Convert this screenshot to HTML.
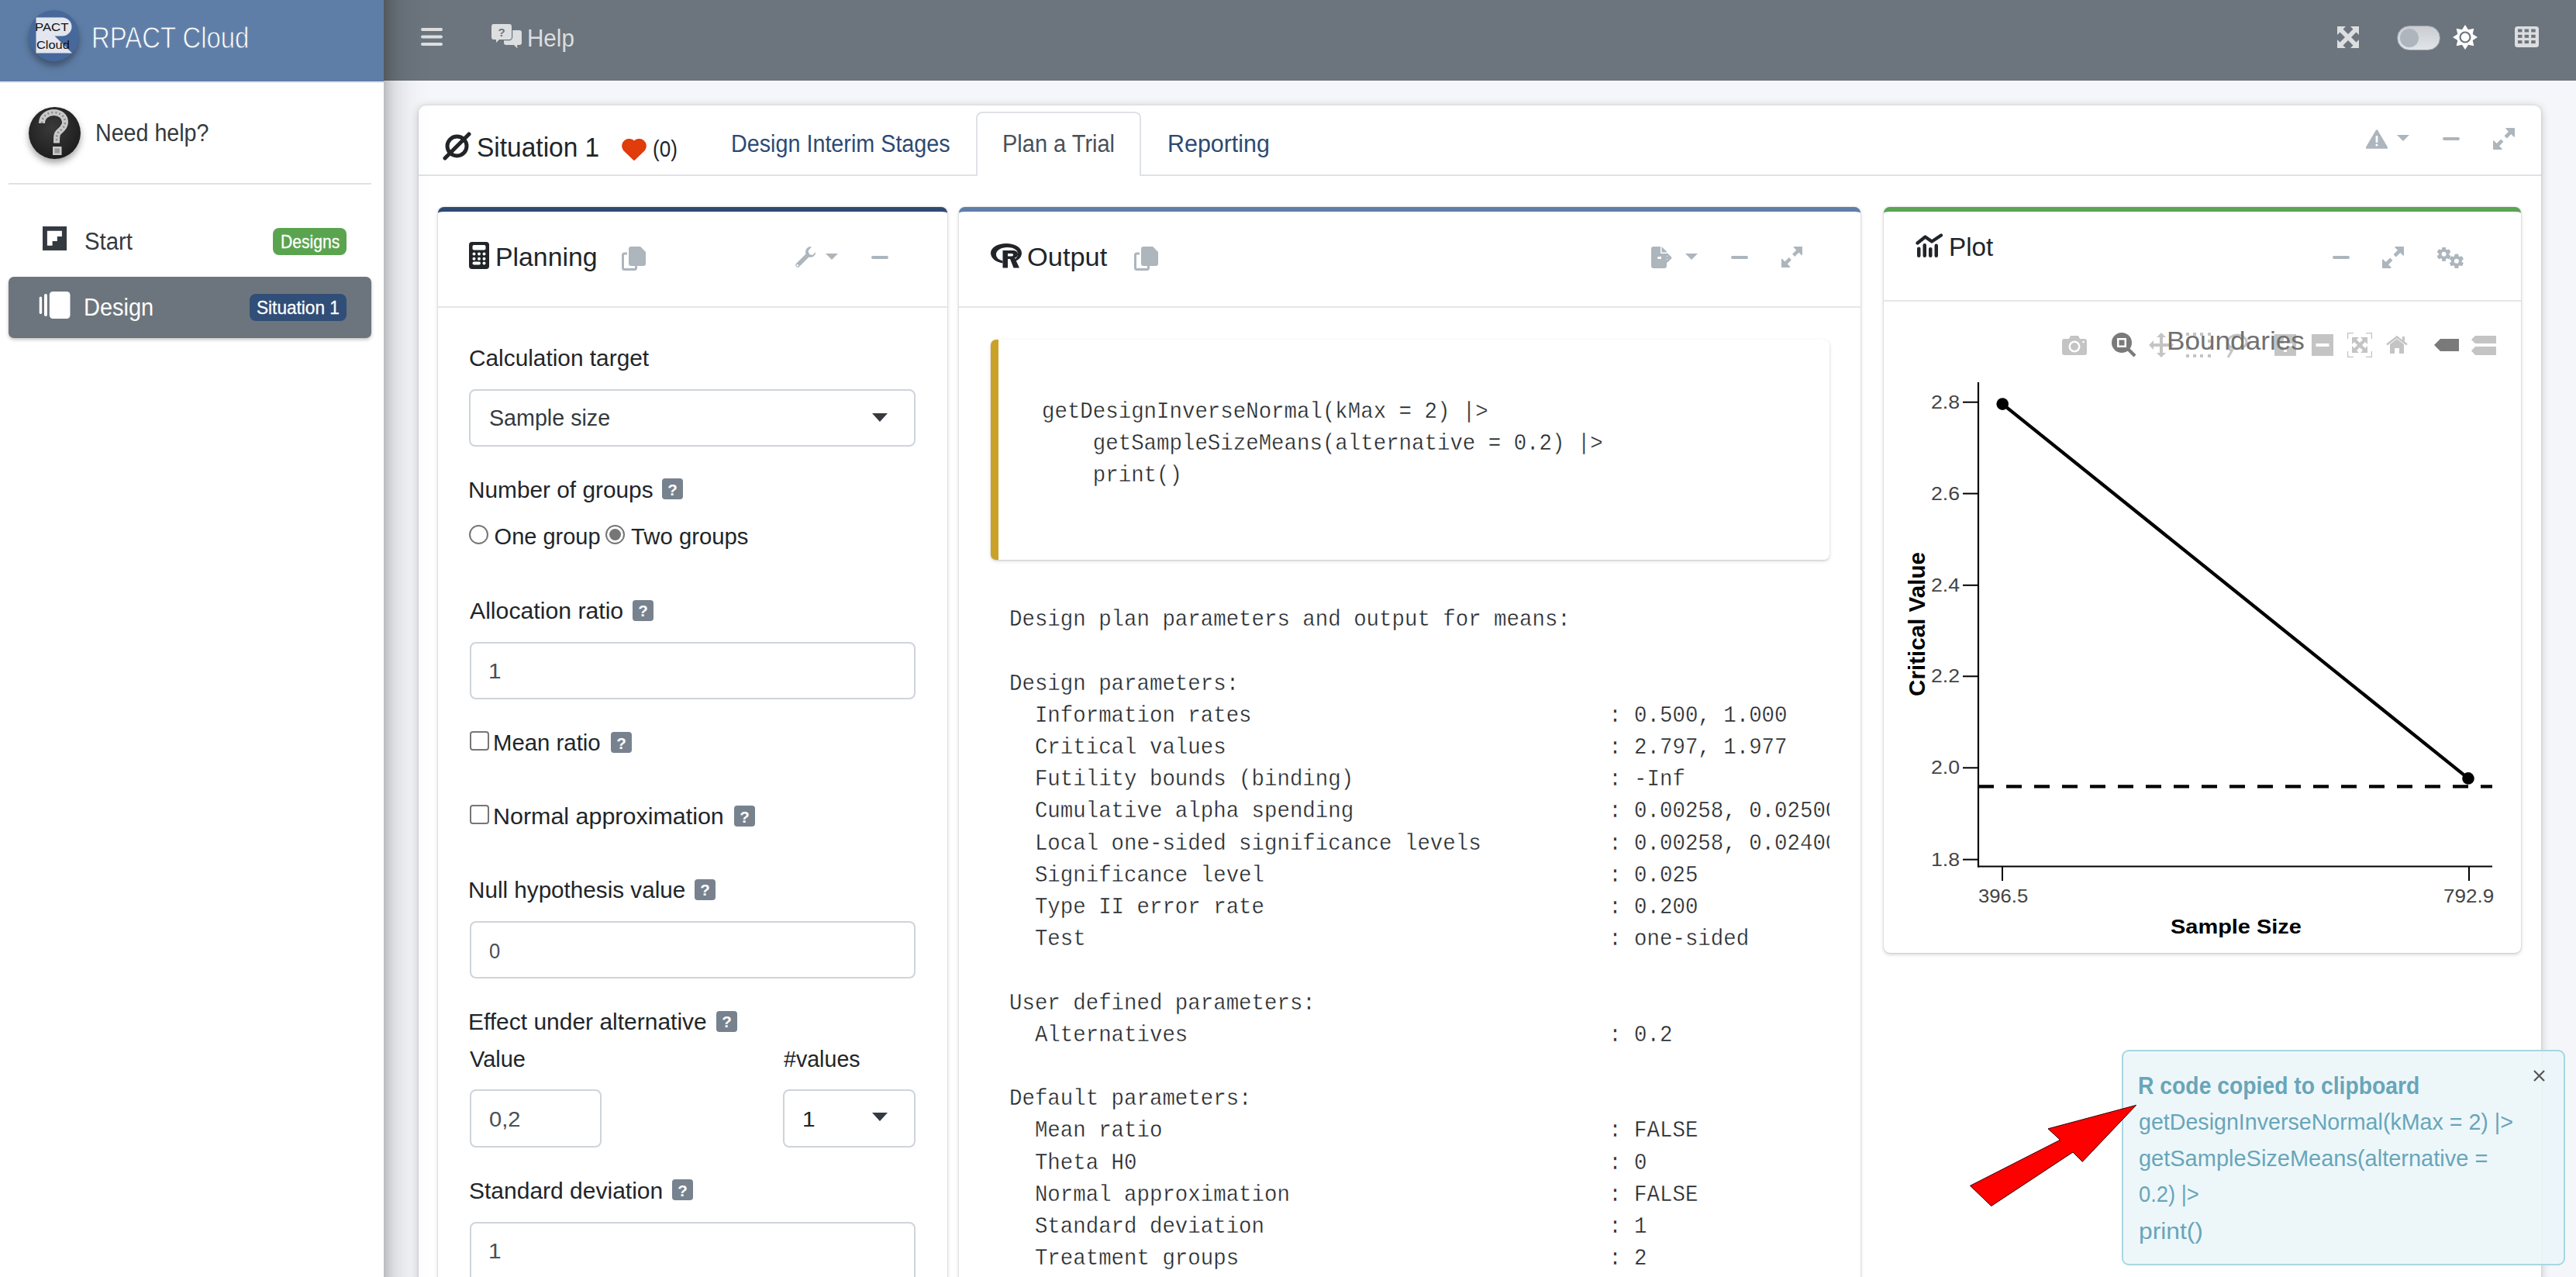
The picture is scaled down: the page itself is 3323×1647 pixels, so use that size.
<!DOCTYPE html>
<html><head><meta charset="utf-8"><title>RPACT Cloud</title>
<style>
html,body{margin:0;padding:0;}
body{width:3323px;height:1647px;overflow:hidden;position:relative;background:#f4f6f9;font-family:'Liberation Sans',sans-serif;}
.b{position:absolute;display:block;}
.t{position:absolute;white-space:pre;line-height:1;transform-origin:0 0;z-index:6;}
</style></head><body>
<div class="b" style="left:540px;top:136px;width:2738px;height:1564px;background:#fff;border-radius:9px;box-shadow:0 0 2px rgba(0,0,0,.15),0 2px 12px rgba(0,0,0,.22);"></div>
<div class="b" style="left:540px;top:224.5px;width:2738px;height:2.0px;background:#dee2e6;"></div>
<div class="b" style="left:1259px;top:144px;width:213px;height:83px;background:#fff;border:2px solid #dee2e6;border-bottom:none;border-radius:8px 8px 0 0;box-sizing:border-box;"></div>
<div class="b" style="left:0px;top:-60px;width:495px;height:1767px;background:#fff;box-shadow:0 0 50px rgba(0,0,0,.3),0 0 16px rgba(0,0,0,.2);z-index:2;"></div>
<div class="b" style="left:0px;top:0px;width:495px;height:105px;background:#5f7ea7;z-index:3;"></div>
<div class="b" style="left:0px;top:105px;width:495px;height:1.5px;background:#e3e7ec;z-index:3;"></div>
<div class="b" style="left:495px;top:0px;width:2828px;height:104px;background:#6c757d;"></div>
<div class="b" style="left:495px;top:104px;width:2828px;height:1px;background:#f8f9fa;"></div>
<div class="b" style="left:565px;top:267px;width:657px;height:1433px;background:#fff;border-radius:8px;border-top:6px solid #2f4b73;box-sizing:border-box;box-shadow:0 0 2px rgba(0,0,0,.2),0 2px 5px rgba(0,0,0,.18);"></div>
<div class="b" style="left:565px;top:395px;width:657px;height:2px;background:#e3e5e8;"></div>
<div class="b" style="left:1237px;top:267px;width:1163px;height:1433px;background:#fff;border-radius:8px;border-top:6px solid #5f7ea8;box-sizing:border-box;box-shadow:0 0 2px rgba(0,0,0,.2),0 2px 5px rgba(0,0,0,.18);"></div>
<div class="b" style="left:1237px;top:395px;width:1163px;height:2px;background:#e3e5e8;"></div>
<div class="b" style="left:2430px;top:267px;width:822px;height:962px;background:#fff;border-radius:8px;border-top:6px solid #5aa454;box-sizing:border-box;box-shadow:0 0 2px rgba(0,0,0,.2),0 2px 5px rgba(0,0,0,.18);"></div>
<div class="b" style="left:2430px;top:387px;width:822px;height:2px;background:#e3e5e8;"></div>
<div class="b" style="left:37px;top:13px;width:65px;height:66px;border-radius:50%;background:#46689b;box-shadow:0 6px 10px rgba(0,0,0,.35);z-index:4;overflow:hidden"><svg style="position:absolute;left:0;top:0" width="65" height="66" viewBox="0 0 65 66"><path d="M9.5 9.5H43A12.5 12 0 0 1 43 33.5H33.5L56 55.5H9.5Z" fill="#e3e6ee"/></svg></div>
<div class="b" style="left:37px;top:138px;width:67px;height:67px;border-radius:50%;background:radial-gradient(circle at 45% 40%,#3a3a3a,#141414);box-shadow:0 5px 9px rgba(0,0,0,.35);z-index:4"></div>
<svg class="b" style="left:37px;top:138px;z-index:5" width="67" height="67" viewBox="37 138 67 67"><path d="M54 159C54 150.5 61 145 69.5 145C78 145 84 150.5 84 157.5C84 164.5 78.5 167.5 75.5 170.5C73 173 73 176 73 184.5" fill="none" stroke="#c9c9c9" stroke-width="8" stroke-linecap="butt"/><path d="M54 159C54 150.5 61 145 69.5 145C78 145 84 150.5 84 157.5C84 164.5 78.5 167.5 75.5 170.5C73 173 73 176 73 184.5" fill="none" stroke="#8a8a8a" stroke-width="2.5" stroke-dasharray="2 3"/><rect x="68" y="189" width="11.5" height="11" fill="#c9c9c9"/><rect x="70.5" y="191.5" width="6.5" height="6" fill="#999"/></svg>
<div class="b" style="left:11px;top:236px;width:468px;height:2px;background:#dee2e6;z-index:4;"></div>
<svg class="b" style="left:55px;top:292px;z-index:4" width="31" height="31" viewBox="0 0 31 31"><rect width="31" height="31" fill="#343a40"/><path d="M5.9 5.8H24.9V12.9H18.8V19H12.6V24.8H5.9Z" fill="#fff"/></svg>
<div class="b" style="left:352px;top:294px;width:95px;height:35px;background:#5aa450;border-radius:8px;z-index:4;"></div>
<div class="b" style="left:11px;top:357px;width:468px;height:79px;background:#6c757d;border-radius:7px;box-shadow:0 2px 4px rgba(0,0,0,.25);z-index:4;"></div>
<svg class="b" style="left:50px;top:375px;z-index:5" width="41" height="37" viewBox="0 0 41 37"><rect x="0.7" y="7.4" width="3.4" height="22.5" rx="1.7" fill="#fff"/><rect x="7" y="4" width="3.9" height="29" rx="1.9" fill="#fff"/><rect x="13.8" y="1" width="26.7" height="35" rx="4.5" fill="#fff"/></svg>
<div class="b" style="left:322px;top:379px;width:125px;height:35px;background:#304e77;border-radius:8px;z-index:5;"></div>
<svg class="b" style="left:543px;top:35px" width="28" height="25" viewBox="0 0 28 25"><rect y="1" width="28" height="4" rx="2" fill="#dcdee0"/><rect y="10.5" width="28" height="4" rx="2" fill="#dcdee0"/><rect y="20" width="28" height="4" rx="2" fill="#dcdee0"/></svg>
<svg class="b" style="left:633px;top:30px" width="42" height="35" viewBox="-1 -1 42 35"><path d="M19 8H36A3 3 0 0 1 39 11V24A3 3 0 0 1 36 27H33L33.5 31.5L29 27H19A3 3 0 0 1 16 24V11A3 3 0 0 1 19 8Z" fill="#dcdee0"/><path d="M3 0H23A3 3 0 0 1 26 3V17A3 3 0 0 1 23 20H10L6 24V20H3A3 3 0 0 1 0 17V3A3 3 0 0 1 3 0Z" fill="#dcdee0" stroke="#6c757d" stroke-width="2.4" paint-order="stroke"/><text x="13" y="15.5" font-family="Liberation Sans" font-weight="bold" font-size="15" text-anchor="middle" fill="#6c757d">?</text></svg>
<svg class="b" style="left:3015px;top:34px" width="28" height="28" viewBox="0 0 28 28"><path d="M0 0H11L7.5 3.5L14 10L20.5 3.5L17 0H28V11L24.5 7.5L18 14L24.5 20.5L28 17V28H17L20.5 24.5L14 18L7.5 24.5L11 28H0V17L3.5 20.5L10 14L3.5 7.5L0 11Z" fill="#dcdee0"/></svg>
<div class="b" style="left:3092px;top:32.5px;width:56px;height:32.5px;border-radius:17px;background:linear-gradient(180deg,#c9ccd1,#e1e4e8);border:1.5px solid #9aa1a9;box-sizing:border-box"></div>
<div class="b" style="left:3096px;top:37px;width:24px;height:24px;background:#adb5bd;border-radius:50%;"></div>
<svg class="b" style="left:3163px;top:31px" width="34" height="34" viewBox="-17 -17 34 34"><polygon fill="#fff" points="0.00,-16.00 4.02,-9.70 11.31,-11.31 9.70,-4.02 16.00,0.00 9.70,4.02 11.31,11.31 4.02,9.70 0.00,16.00 -4.02,9.70 -11.31,11.31 -9.70,4.02 -16.00,0.00 -9.70,-4.02 -11.31,-11.31 -4.02,-9.70"/><circle r="6.5" fill="none" stroke="#6c757d" stroke-width="2.2"/></svg>
<svg class="b" style="left:3244px;top:34px" width="31" height="27" viewBox="0 0 31 27"><rect width="31" height="27" rx="3.5" fill="#dcdee0"/><rect x="4.0" y="3.5" width="5.5" height="4" fill="#6c757d"/><rect x="4.0" y="10.8" width="5.5" height="4" fill="#6c757d"/><rect x="4.0" y="18.1" width="5.5" height="4" fill="#6c757d"/><rect x="12.6" y="3.5" width="5.5" height="4" fill="#6c757d"/><rect x="12.6" y="10.8" width="5.5" height="4" fill="#6c757d"/><rect x="12.6" y="18.1" width="5.5" height="4" fill="#6c757d"/><rect x="21.2" y="3.5" width="5.5" height="4" fill="#6c757d"/><rect x="21.2" y="10.8" width="5.5" height="4" fill="#6c757d"/><rect x="21.2" y="18.1" width="5.5" height="4" fill="#6c757d"/></svg>
<svg class="b" style="left:571px;top:170px;z-index:6" width="37" height="37" viewBox="0 0 37 37"><circle cx="18.5" cy="18.5" r="12.5" fill="none" stroke="#212529" stroke-width="5"/><line x1="3" y1="34" x2="34" y2="3" stroke="#212529" stroke-width="5" stroke-linecap="round"/></svg>
<svg class="b" style="left:802px;top:179px;z-index:6" width="32" height="28" viewBox="0 0 32 28"><path d="M16 27L3 14.5A8 8 0 0 1 16 4A8 8 0 0 1 29 14.5Z" fill="#e03c0c" stroke="#e03c0c" stroke-width="2" stroke-linejoin="round"/></svg>
<svg class="b" style="left:3052px;top:167px" width="28" height="25" viewBox="0 0 28 25"><path d="M14 1.5L27 23.5H1Z" fill="#adb5bd" stroke="#adb5bd" stroke-width="2.5" stroke-linejoin="round"/><rect x="12.6" y="8" width="2.8" height="9" rx="1.2" fill="#fff"/><circle cx="14" cy="20" r="1.6" fill="#fff"/></svg>
<svg class="b" style="left:3092px;top:173.5px" width="16" height="8" viewBox="0 0 16 8"><path d="M0 0H16L8 8Z" fill="#adb5bd"/></svg>
<div class="b" style="left:3151px;top:176.5px;width:22px;height:4.0px;background:#adb5bd;border-radius:2px;"></div>
<svg class="b" style="left:3216px;top:164.5px" width="28" height="28" viewBox="0 0 28 28"><path d="M17 0.7H27.3V11Z M0.7 17V27.3H11Z" fill="#adb5bd" stroke="#adb5bd" stroke-width="1.4" stroke-linejoin="round"/><path d="M22.5 5.5L16.2 11.8M5.5 22.5L11.8 16.2" stroke="#adb5bd" stroke-width="4.6"/></svg>
<svg class="b" style="left:605px;top:312px" width="26" height="35" viewBox="0 0 26 35"><rect width="26" height="35" rx="4" fill="#212529"/><rect x="4.5" y="4" width="17" height="6.5" rx="2" fill="#fff"/><circle cx="6.5" cy="15.5" r="2" fill="#fff"/><circle cx="6.5" cy="21.7" r="2" fill="#fff"/><circle cx="13.0" cy="15.5" r="2" fill="#fff"/><circle cx="13.0" cy="21.7" r="2" fill="#fff"/><circle cx="19.5" cy="15.5" r="2" fill="#fff"/><circle cx="19.5" cy="21.7" r="2" fill="#fff"/><rect x="4.5" y="25.5" width="10.5" height="4" rx="2" fill="#fff"/><circle cx="19.5" cy="27.5" r="2" fill="#fff"/></svg>
<svg class="b" style="left:802px;top:318px" width="31" height="31" viewBox="0 0 31 31"><path d="M7 9H3.5A2 2 0 0 0 1.5 11V27.5A2 2 0 0 0 3.5 29.5H16.5A2 2 0 0 0 18.5 27.5V25" fill="none" stroke="#adb5bd" stroke-width="3"/><path d="M12 0H24L31 7V22A3 3 0 0 1 28 25H12A3 3 0 0 1 9 22V3A3 3 0 0 1 12 0Z" fill="#adb5bd"/></svg>
<svg class="b" style="left:1025px;top:318px" width="28" height="28" viewBox="0 0 28 28"><path d="M21 0A7 7 0 0 0 14.5 9.5L1.5 22.5A3 3 0 0 0 5.5 26.5L18.5 13.5A7 7 0 0 0 27.5 7L23 11L19 10L17.5 5.5L21.5 1Z" fill="#adb5bd"/><circle cx="3.8" cy="24.2" r="1.3" fill="#fff"/></svg>
<svg class="b" style="left:1065px;top:327px" width="16" height="8" viewBox="0 0 16 8"><path d="M0 0H16L8 8Z" fill="#adb5bd"/></svg>
<div class="b" style="left:1124px;top:330px;width:22px;height:3.5px;background:#adb5bd;border-radius:2px;"></div>
<div class="b" style="left:605px;top:501.5px;width:576px;height:74.0px;border:2px solid #ced4da;border-radius:8px;box-sizing:border-box;background:#fff;"></div>
<svg class="b" style="left:1125px;top:533px" width="20" height="11" viewBox="0 0 20 11"><path d="M0 0H20L10 11Z" fill="#343a40"/></svg>
<div class="b" style="left:854px;top:617px;width:27px;height:27px;border-radius:4px;background:#77828e;"></div>
<div class="b" style="left:854px;top:620.5px;width:27px;height:21px;font:bold 20.5px/21px 'Liberation Sans';color:#fff;text-align:center;z-index:6">?</div>
<div class="b" style="left:605px;top:676.5px;width:25px;height:25px;border-radius:50%;border:2px solid #767676;box-sizing:border-box;background:#fff"></div>
<div class="b" style="left:781px;top:676.5px;width:25px;height:25px;border-radius:50%;border:2px solid #767676;box-sizing:border-box;background:#fff"></div>
<div class="b" style="left:786px;top:681.5px;width:15px;height:15.0px;border-radius:50%;background:#767676;"></div>
<div class="b" style="left:816px;top:773.5px;width:27px;height:27px;border-radius:4px;background:#77828e;"></div>
<div class="b" style="left:816px;top:777.0px;width:27px;height:21px;font:bold 20.5px/21px 'Liberation Sans';color:#fff;text-align:center;z-index:6">?</div>
<div class="b" style="left:605.5px;top:828px;width:575.5px;height:73.5px;border:2px solid #ced4da;border-radius:8px;box-sizing:border-box;background:#fff;"></div>
<div class="b" style="left:605.5px;top:942.5px;width:25px;height:25px;border-radius:4px;border:2px solid #767676;box-sizing:border-box;background:#fff"></div>
<div class="b" style="left:788px;top:944px;width:27px;height:27px;border-radius:4px;background:#77828e;"></div>
<div class="b" style="left:788px;top:947.5px;width:27px;height:21px;font:bold 20.5px/21px 'Liberation Sans';color:#fff;text-align:center;z-index:6">?</div>
<div class="b" style="left:605.5px;top:1037.5px;width:25px;height:25px;border-radius:4px;border:2px solid #767676;box-sizing:border-box;background:#fff"></div>
<div class="b" style="left:947px;top:1039px;width:27px;height:27px;border-radius:4px;background:#77828e;"></div>
<div class="b" style="left:947px;top:1042.5px;width:27px;height:21px;font:bold 20.5px/21px 'Liberation Sans';color:#fff;text-align:center;z-index:6">?</div>
<div class="b" style="left:896px;top:1133.5px;width:27px;height:27px;border-radius:4px;background:#77828e;"></div>
<div class="b" style="left:896px;top:1137.0px;width:27px;height:21px;font:bold 20.5px/21px 'Liberation Sans';color:#fff;text-align:center;z-index:6">?</div>
<div class="b" style="left:605.5px;top:1187.5px;width:575.5px;height:74.0px;border:2px solid #ced4da;border-radius:8px;box-sizing:border-box;background:#fff;"></div>
<div class="b" style="left:924px;top:1303.5px;width:27px;height:27px;border-radius:4px;background:#77828e;"></div>
<div class="b" style="left:924px;top:1307.0px;width:27px;height:21px;font:bold 20.5px/21px 'Liberation Sans';color:#fff;text-align:center;z-index:6">?</div>
<div class="b" style="left:606px;top:1404.5px;width:169.5px;height:75.0px;border:2px solid #ced4da;border-radius:8px;box-sizing:border-box;background:#fff;"></div>
<div class="b" style="left:1010px;top:1404.5px;width:171px;height:75.0px;border:2px solid #ced4da;border-radius:8px;box-sizing:border-box;background:#fff;"></div>
<svg class="b" style="left:1125px;top:1435px" width="20" height="11" viewBox="0 0 20 11"><path d="M0 0H20L10 11Z" fill="#343a40"/></svg>
<div class="b" style="left:867px;top:1521px;width:27px;height:27px;border-radius:4px;background:#77828e;"></div>
<div class="b" style="left:867px;top:1524.5px;width:27px;height:21px;font:bold 20.5px/21px 'Liberation Sans';color:#fff;text-align:center;z-index:6">?</div>
<div class="b" style="left:605.5px;top:1575.5px;width:575.5px;height:124.5px;border:2px solid #ced4da;border-radius:8px;box-sizing:border-box;background:#fff;"></div>
<svg class="b" style="left:1278px;top:313.5px" width="40" height="32" viewBox="0 0 40 32"><path fill="#212529" fill-rule="evenodd" d="M20 0C31 0 40 5 40 12.5C40 17.5 36 21.5 30 23.5L29.5 21C33.5 19.5 35 16.5 35 13.5C35 8 29 5 21.5 5C13 5 7 9 7 14C7 18 10 21 15.5 22.5V25.5C6.5 24 0 19 0 12.5C0 5 9 0 20 0Z"/><path fill="#212529" fill-rule="evenodd" d="M15.5 9H29C33 9 35 11.5 35 14C35 16.5 33.5 18 31 18.5L37 31.5H29.5L25 20H22V31.5H15.5Z M22 13V16.5H27C28.5 16.5 29 15.8 29 14.8C29 13.8 28.5 13 27 13Z"/></svg>
<svg class="b" style="left:1463px;top:318px" width="31" height="31" viewBox="0 0 31 31"><path d="M7 9H3.5A2 2 0 0 0 1.5 11V27.5A2 2 0 0 0 3.5 29.5H16.5A2 2 0 0 0 18.5 27.5V25" fill="none" stroke="#adb5bd" stroke-width="3"/><path d="M12 0H24L31 7V22A3 3 0 0 1 28 25H12A3 3 0 0 1 9 22V3A3 3 0 0 1 12 0Z" fill="#adb5bd"/></svg>
<svg class="b" style="left:2130px;top:318px" width="32" height="28" viewBox="0 0 32 28"><path d="M3 0H12V7.5A1.5 1.5 0 0 0 13.5 9H20V13H9.5A1.5 1.5 0 0 0 9.5 16H20V25A3 3 0 0 1 17 28H3A3 3 0 0 1 0 25V3A3 3 0 0 1 3 0Z M13.5 0L20 6.5V7.5H13.5Z" fill="#adb5bd"/><path d="M20.5 10L25 14.5L20.5 19" fill="none" stroke="#adb5bd" stroke-width="3" stroke-linecap="round" stroke-linejoin="round"/><path d="M13 14.5H24" stroke="#adb5bd" stroke-width="3"/></svg>
<svg class="b" style="left:2174px;top:327px" width="16" height="8" viewBox="0 0 16 8"><path d="M0 0H16L8 8Z" fill="#adb5bd"/></svg>
<div class="b" style="left:2233px;top:330px;width:22px;height:3.5px;background:#adb5bd;border-radius:2px;"></div>
<svg class="b" style="left:2298px;top:318px" width="27" height="27" viewBox="0 0 28 28"><path d="M17 0.7H27.3V11Z M0.7 17V27.3H11Z" fill="#adb5bd" stroke="#adb5bd" stroke-width="1.4" stroke-linejoin="round"/><path d="M22.5 5.5L16.2 11.8M5.5 22.5L11.8 16.2" stroke="#adb5bd" stroke-width="4.6"/></svg>
<div class="b" style="left:1278px;top:438px;width:1082px;height:284px;background:#fff;border-left:10px solid #c9a227;border-radius:7px;box-sizing:border-box;box-shadow:0 1px 2px rgba(0,0,0,.12),0 2px 5px rgba(0,0,0,.12);"></div>
<div class="b" style="left:1344px;top:516.70px;font:29.8px/41px 'Liberation Mono';color:#212529;white-space:pre;transform:scaleX(0.9200);transform-origin:0 0;z-index:6;-webkit-text-stroke:.4px #fff;line-height:41px;margin-top:-5.60px">getDesignInverseNormal(kMax = 2) |&gt;
    getSampleSizeMeans(alternative = 0.2) |&gt;
    print()</div>
<div class="b" style="left:1237px;top:740px;width:1123px;height:960px;overflow:hidden;z-index:6"><div style="position:absolute;left:65px;top:39.20px;font:29.8px/41.2px 'Liberation Mono';color:#212529;white-space:pre;transform:scaleX(0.9200);transform-origin:0 0;-webkit-text-stroke:.4px #fff;">Design plan parameters and output for means:

Design parameters:
  Information rates                            : 0.500, 1.000
  Critical values                              : 2.797, 1.977
  Futility bounds (binding)                    : -Inf
  Cumulative alpha spending                    : 0.00258, 0.02500
  Local one-sided significance levels          : 0.00258, 0.02400
  Significance level                           : 0.025
  Type II error rate                           : 0.200
  Test                                         : one-sided

User defined parameters:
  Alternatives                                 : 0.2

Default parameters:
  Mean ratio                                   : FALSE
  Theta H0                                     : 0
  Normal approximation                         : FALSE
  Standard deviation                           : 1
  Treatment groups                             : 2
  Planned allocation ratio                     : 1</div></div>
<svg class="b" style="left:2471px;top:301px" width="36" height="32" viewBox="0 0 36 32"><path d="M2.5 12.5L12.5 4.5L21 10.5L33 2.5" fill="none" stroke="#212529" stroke-width="4.2" stroke-linecap="round" stroke-linejoin="round"/><rect x="2" y="17.5" width="4.5" height="13.5" rx="2.25" fill="#212529"/><rect x="9.5" y="13" width="4.5" height="18" rx="2.25" fill="#212529"/><rect x="17" y="18" width="4.5" height="13" rx="2.25" fill="#212529"/><rect x="24.5" y="13.5" width="4.5" height="17.5" rx="2.25" fill="#212529"/></svg>
<div class="b" style="left:3009px;top:329.5px;width:22px;height:4.0px;background:#adb5bd;border-radius:2px;"></div>
<svg class="b" style="left:3073px;top:317.5px" width="28" height="28" viewBox="0 0 28 28"><path d="M17 0.7H27.3V11Z M0.7 17V27.3H11Z" fill="#adb5bd" stroke="#adb5bd" stroke-width="1.4" stroke-linejoin="round"/><path d="M22.5 5.5L16.2 11.8M5.5 22.5L11.8 16.2" stroke="#adb5bd" stroke-width="4.6"/></svg>
<svg class="b" style="left:3143px;top:318px" width="36" height="28" viewBox="0 0 36 28"><g transform="translate(9.6,9.8)"><rect x="-2.4" y="-8.899999999999999" width="4.8" height="17.799999999999997" rx="1.2" fill="#adb5bd" transform="rotate(0)"/><rect x="-2.4" y="-8.899999999999999" width="4.8" height="17.799999999999997" rx="1.2" fill="#adb5bd" transform="rotate(60)"/><rect x="-2.4" y="-8.899999999999999" width="4.8" height="17.799999999999997" rx="1.2" fill="#adb5bd" transform="rotate(120)"/><rect x="-2.4" y="-8.899999999999999" width="4.8" height="17.799999999999997" rx="1.2" fill="#adb5bd" transform="rotate(180)"/><rect x="-2.4" y="-8.899999999999999" width="4.8" height="17.799999999999997" rx="1.2" fill="#adb5bd" transform="rotate(240)"/><rect x="-2.4" y="-8.899999999999999" width="4.8" height="17.799999999999997" rx="1.2" fill="#adb5bd" transform="rotate(300)"/><circle r="6.79" fill="#adb5bd"/><circle r="2.96" fill="#fff"/></g><g transform="translate(25.9,18.8)"><rect x="-2.4" y="-9.1" width="4.8" height="18.2" rx="1.2" fill="#adb5bd" transform="rotate(0)"/><rect x="-2.4" y="-9.1" width="4.8" height="18.2" rx="1.2" fill="#adb5bd" transform="rotate(60)"/><rect x="-2.4" y="-9.1" width="4.8" height="18.2" rx="1.2" fill="#adb5bd" transform="rotate(120)"/><rect x="-2.4" y="-9.1" width="4.8" height="18.2" rx="1.2" fill="#adb5bd" transform="rotate(180)"/><rect x="-2.4" y="-9.1" width="4.8" height="18.2" rx="1.2" fill="#adb5bd" transform="rotate(240)"/><rect x="-2.4" y="-9.1" width="4.8" height="18.2" rx="1.2" fill="#adb5bd" transform="rotate(300)"/><circle r="6.94" fill="#adb5bd"/><circle r="3.03" fill="#fff"/></g></svg>
<svg class="b" style="left:2660px;top:432px;z-index:7" width="32" height="26" viewBox="0 0 32 26"><path d="M3 5H9L11 1H21L23 5H29A3 3 0 0 1 32 8V23A3 3 0 0 1 29 26H3A3 3 0 0 1 0 23V8A3 3 0 0 1 3 5Z" fill="#c4c4c4"/><circle cx="16" cy="15" r="7.5" fill="#fff"/><circle cx="16" cy="15" r="5" fill="#c4c4c4"/><circle cx="27.5" cy="9" r="1.3" fill="#fff"/></svg>
<svg class="b" style="left:2724px;top:429px;z-index:7" width="32" height="32" viewBox="0 0 32 32"><circle cx="13" cy="13" r="13" fill="#7a7a7a"/><rect x="7" y="7" width="12" height="12" fill="#fff"/><rect x="9.5" y="9.5" width="7" height="7" fill="#7a7a7a"/><path d="M20 23L23 20L31.5 28.5L28.5 31.5Z" fill="#7a7a7a"/></svg>
<svg class="b" style="left:2772px;top:429px;z-index:7" width="32" height="32" viewBox="0 0 32 32"><path d="M16 0L22 6H18V14H26V10L32 16L26 22V18H18V26H22L16 32L10 26H14V18H6V22L0 16L6 10V14H14V6H10Z" fill="#c4c4c4"/></svg>
<svg class="b" style="left:2820px;top:429px;z-index:7" width="32" height="32" viewBox="0 0 32 32"><rect x="0" y="0" width="4" height="4" fill="#c4c4c4"/><rect x="0" y="28" width="4" height="4" fill="#c4c4c4"/><rect x="9" y="0" width="4" height="4" fill="#c4c4c4"/><rect x="9" y="28" width="4" height="4" fill="#c4c4c4"/><rect x="18" y="0" width="4" height="4" fill="#c4c4c4"/><rect x="18" y="28" width="4" height="4" fill="#c4c4c4"/><rect x="28" y="0" width="4" height="4" fill="#c4c4c4"/><rect x="28" y="28" width="4" height="4" fill="#c4c4c4"/><rect x="0" y="9" width="4" height="4" fill="#c4c4c4"/><rect x="28" y="9" width="4" height="4" fill="#c4c4c4"/><rect x="0" y="18" width="4" height="4" fill="#c4c4c4"/><rect x="28" y="18" width="4" height="4" fill="#c4c4c4"/></svg>
<svg class="b" style="left:2868px;top:430px;z-index:7" width="32" height="32" viewBox="0 0 32 32"><ellipse cx="18" cy="11" rx="12" ry="9" fill="none" stroke="#c4c4c4" stroke-width="3"/><path d="M9 17C6 20 9 23 12 21L6 31" fill="none" stroke="#c4c4c4" stroke-width="3"/></svg>
<svg class="b" style="left:2934px;top:431px;z-index:7" width="28" height="28" viewBox="0 0 28 28"><rect width="28" height="28" fill="#c4c4c4"/><rect x="5" y="12" width="18" height="4" fill="#fff"/><rect x="12" y="5" width="4" height="18" fill="#fff"/></svg>
<svg class="b" style="left:2982px;top:431px;z-index:7" width="28" height="28" viewBox="0 0 28 28"><rect width="28" height="28" fill="#c4c4c4"/><rect x="5.5" y="12" width="17" height="4" fill="#fff"/></svg>
<svg class="b" style="left:3028px;top:429px;z-index:7" width="32" height="32" viewBox="0 0 32 32"><path d="M0 8V0H8M24 0H32V8M32 24V32H24M8 32H0V24" fill="none" stroke="#c4c4c4" stroke-width="2.5"/><path d="M6 6H15L12 9L16 13L20 9L17 6H26V15L23 12L19 16L23 20L26 17V26H17L20 23L16 19L12 23L15 26H6V17L9 20L13 16L9 12L6 15Z" fill="#c4c4c4"/></svg>
<svg class="b" style="left:3078px;top:433px;z-index:7" width="28" height="23" viewBox="0 0 28 23"><path d="M1 11.5L14 1.5L27 11.5" fill="none" stroke="#c4c4c4" stroke-width="2.5"/><path d="M21 1H24V8L21 6Z" fill="#c4c4c4"/><path d="M5 11L14 4L23 11V23H17V16H11V23H5Z" fill="#c4c4c4"/></svg>
<svg class="b" style="left:3140px;top:437px;z-index:7" width="32" height="16" viewBox="0 0 32 16"><path d="M8 0H32V16H8L0 8Z" fill="#7a7a7a"/></svg>
<svg class="b" style="left:3188px;top:433px;z-index:7" width="32" height="25" viewBox="0 0 32 25"><path d="M5 0H32V10H5L0 5Z M5 14H32V25H5L0 19.5Z" fill="#c4c4c4"/></svg>
<svg class="b" style="left:0;top:0;z-index:1" width="3323" height="1647" viewBox="0 0 3323 1647"><line x1="2552" y1="493" x2="2552" y2="1118.5" stroke="#000" stroke-width="2.2"/><line x1="2551" y1="1117.5" x2="3215" y2="1117.5" stroke="#000" stroke-width="2.2"/><line x1="2532" y1="518.7" x2="2552" y2="518.7" stroke="#000" stroke-width="2"/><line x1="2532" y1="636.6" x2="2552" y2="636.6" stroke="#000" stroke-width="2"/><line x1="2532" y1="754.8" x2="2552" y2="754.8" stroke="#000" stroke-width="2"/><line x1="2532" y1="872.3" x2="2552" y2="872.3" stroke="#000" stroke-width="2"/><line x1="2532" y1="990.3" x2="2552" y2="990.3" stroke="#000" stroke-width="2"/><line x1="2532" y1="1108.6" x2="2552" y2="1108.6" stroke="#000" stroke-width="2"/><line x1="2583" y1="1117" x2="2583" y2="1136" stroke="#000" stroke-width="2"/><line x1="3185" y1="1117" x2="3185" y2="1136" stroke="#000" stroke-width="2"/><line x1="2552" y1="1014.4" x2="3215" y2="1014.4" stroke="#000" stroke-width="4.4" stroke-dasharray="20 16"/><line x1="2583.2" y1="521.1" x2="3184" y2="1003.9" stroke="#000" stroke-width="4.4"/><circle cx="2583.2" cy="521.1" r="7.8" fill="#000"/><circle cx="3184" cy="1003.9" r="7.8" fill="#000"/></svg>
<div class="b" style="left:2473px;top:804.5px;width:0;height:0;z-index:6"><div style="position:absolute;left:0;top:0;transform:translate(-50%,-50%) rotate(-90deg);white-space:nowrap;font:bold 29.6px/1 'Liberation Sans';color:#000;transform-origin:50% 50%">Critical Value</div></div>
<div class="b" style="left:2737px;top:1354px;width:572px;height:278px;box-sizing:border-box;border:2px solid #a8d6e3;border-radius:9px;background:rgba(235,246,249,.9);z-index:8"></div>
<svg class="b" style="left:3268px;top:1380px;z-index:9" width="15" height="15" viewBox="0 0 15 15"><path d="M1 1L14 14M14 1L1 14" stroke="#555" stroke-width="2.2"/></svg>
<svg class="b" style="left:0;top:0;z-index:9" width="3323" height="1647" viewBox="0 0 3323 1647"><polygon points="2755.6,1425.4 2642,1455.8 2657.5,1470.2 2541.5,1529.3 2568.7,1555.5 2674,1486 2686.3,1498.3" fill="#ff0000" stroke="#300" stroke-width="1"/></svg>
<div class="t" style="left:45.38px;top:27.51px;font-size:14.93px;color:#111111;font-weight:normal;font-family:'Liberation Sans', sans-serif;transform:scaleX(1.1231);">PACT</div>
<div class="t" style="left:46.50px;top:50.91px;font-size:14.93px;color:#111111;font-weight:normal;font-family:'Liberation Sans', sans-serif;transform:scaleX(1.0985);">Cloud</div>
<div class="t" style="left:118.48px;top:29.34px;font-size:39.13px;color:#ffffff;font-weight:normal;font-family:'Liberation Sans', sans-serif;transform:scaleX(0.8402);z-index:6;-webkit-text-stroke:.9px #5f7ea7;">RPACT Cloud</div>
<div class="t" style="left:123.20px;top:155.50px;font-size:31.88px;color:#343a40;font-weight:normal;font-family:'Liberation Sans', sans-serif;transform:scaleX(0.8982);">Need help?</div>
<div class="t" style="left:108.54px;top:295.73px;font-size:30.43px;color:#343a40;font-weight:normal;font-family:'Liberation Sans', sans-serif;transform:scaleX(0.9641);">Start</div>
<div class="t" style="left:361.69px;top:300.99px;font-size:23.19px;color:#fff;font-weight:normal;font-family:'Liberation Sans', sans-serif;transform:scaleX(0.9102);-webkit-text-stroke:.3px #fff;">Designs</div>
<div class="t" style="left:107.59px;top:381.23px;font-size:30.43px;color:#fff;font-weight:normal;font-family:'Liberation Sans', sans-serif;transform:scaleX(0.9529);">Design</div>
<div class="t" style="left:331.02px;top:385.89px;font-size:23.19px;color:#fff;font-weight:normal;font-family:'Liberation Sans', sans-serif;transform:scaleX(0.9751);-webkit-text-stroke:.3px #fff;">Situation 1</div>
<div class="t" style="left:680.06px;top:33.53px;font-size:30.43px;color:#dcdee0;font-weight:normal;font-family:'Liberation Sans', sans-serif;transform:scaleX(0.9724);">Help</div>
<div class="t" style="left:615.04px;top:173.04px;font-size:34.78px;color:#212529;font-weight:normal;font-family:'Liberation Sans', sans-serif;transform:scaleX(0.9632);">Situation 1</div>
<div class="t" style="left:841.63px;top:177.10px;font-size:30px;color:#212529;font-weight:normal;font-family:'Liberation Sans', sans-serif;transform:scaleX(0.8681);">(0)</div>
<div class="t" style="left:942.51px;top:170.43px;font-size:30.43px;color:#2c4a73;font-weight:normal;font-family:'Liberation Sans', sans-serif;transform:scaleX(0.9445);">Design Interim Stages</div>
<div class="t" style="left:1293.09px;top:170.43px;font-size:30.43px;color:#495057;font-weight:normal;font-family:'Liberation Sans', sans-serif;transform:scaleX(0.9532);">Plan a Trial</div>
<div class="t" style="left:1506.00px;top:170.43px;font-size:30.43px;color:#2c4a73;font-weight:normal;font-family:'Liberation Sans', sans-serif;">Reporting</div>
<div class="t" style="left:638.97px;top:314.77px;font-size:33.33px;color:#212529;font-weight:normal;font-family:'Liberation Sans', sans-serif;transform:scaleX(1.0144);">Planning</div>
<div class="t" style="left:604.97px;top:448.26px;font-size:28.99px;color:#212529;font-weight:normal;font-family:'Liberation Sans', sans-serif;transform:scaleX(1.0289);">Calculation target</div>
<div class="t" style="left:631.01px;top:524.96px;font-size:28.99px;color:#343a40;font-weight:normal;font-family:'Liberation Sans', sans-serif;transform:scaleX(0.9888);">Sample size</div>
<div class="t" style="left:603.94px;top:617.96px;font-size:28.99px;color:#212529;font-weight:normal;font-family:'Liberation Sans', sans-serif;transform:scaleX(1.0283);">Number of groups</div>
<div class="t" style="left:637.60px;top:677.96px;font-size:28.99px;color:#212529;font-weight:normal;font-family:'Liberation Sans', sans-serif;">One group</div>
<div class="t" style="left:814.00px;top:677.96px;font-size:28.99px;color:#212529;font-weight:normal;font-family:'Liberation Sans', sans-serif;transform:scaleX(1.0111);">Two groups</div>
<div class="t" style="left:606.00px;top:774.16px;font-size:28.99px;color:#212529;font-weight:normal;font-family:'Liberation Sans', sans-serif;transform:scaleX(1.0424);">Allocation ratio</div>
<div class="t" style="left:629.83px;top:852.19px;font-size:27.54px;color:#495057;font-weight:normal;font-family:'Liberation Sans', sans-serif;transform:scaleX(1.0833);">1</div>
<div class="t" style="left:636.47px;top:943.96px;font-size:28.99px;color:#212529;font-weight:normal;font-family:'Liberation Sans', sans-serif;transform:scaleX(1.0126);">Mean ratio</div>
<div class="t" style="left:636.40px;top:1038.96px;font-size:28.99px;color:#212529;font-weight:normal;font-family:'Liberation Sans', sans-serif;transform:scaleX(1.0503);">Normal approximation</div>
<div class="t" style="left:603.95px;top:1133.96px;font-size:28.99px;color:#212529;font-weight:normal;font-family:'Liberation Sans', sans-serif;transform:scaleX(1.0230);">Null hypothesis value</div>
<div class="t" style="left:631.07px;top:1212.79px;font-size:27.54px;color:#495057;font-weight:normal;font-family:'Liberation Sans', sans-serif;transform:scaleX(0.9286);">0</div>
<div class="t" style="left:603.93px;top:1303.96px;font-size:28.99px;color:#212529;font-weight:normal;font-family:'Liberation Sans', sans-serif;transform:scaleX(1.0342);">Effect under alternative</div>
<div class="t" style="left:606.00px;top:1351.66px;font-size:28.99px;color:#212529;font-weight:normal;font-family:'Liberation Sans', sans-serif;">Value</div>
<div class="t" style="left:1010.70px;top:1351.66px;font-size:28.99px;color:#212529;font-weight:normal;font-family:'Liberation Sans', sans-serif;transform:scaleX(0.9868);">#values</div>
<div class="t" style="left:630.94px;top:1429.69px;font-size:27.54px;color:#495057;font-weight:normal;font-family:'Liberation Sans', sans-serif;transform:scaleX(1.0567);">0,2</div>
<div class="t" style="left:1034.83px;top:1429.69px;font-size:27.54px;color:#212529;font-weight:normal;font-family:'Liberation Sans', sans-serif;transform:scaleX(1.0833);">1</div>
<div class="t" style="left:604.96px;top:1521.76px;font-size:28.99px;color:#212529;font-weight:normal;font-family:'Liberation Sans', sans-serif;transform:scaleX(1.0351);">Standard deviation</div>
<div class="t" style="left:629.83px;top:1599.79px;font-size:27.54px;color:#495057;font-weight:normal;font-family:'Liberation Sans', sans-serif;transform:scaleX(1.0833);">1</div>
<div class="t" style="left:1324.97px;top:315.17px;font-size:33.33px;color:#212529;font-weight:normal;font-family:'Liberation Sans', sans-serif;transform:scaleX(1.0322);">Output</div>
<div class="t" style="left:2514.01px;top:302.27px;font-size:33.33px;color:#212529;font-weight:normal;font-family:'Liberation Sans', sans-serif;transform:scaleX(0.9970);">Plot</div>
<div class="t" style="left:2794.89px;top:422.77px;font-size:33.33px;color:#707070;font-weight:normal;font-family:'Liberation Sans', sans-serif;transform:scaleX(1.0546);z-index:8;">Boundaries</div>
<div class="t" style="left:2490.62px;top:506.66px;font-size:24.64px;color:#444444;font-weight:normal;font-family:'Liberation Sans', sans-serif;transform:scaleX(1.0849);">2.8</div>
<div class="t" style="left:2490.62px;top:624.56px;font-size:24.64px;color:#444444;font-weight:normal;font-family:'Liberation Sans', sans-serif;transform:scaleX(1.0849);">2.6</div>
<div class="t" style="left:2490.62px;top:742.76px;font-size:24.64px;color:#444444;font-weight:normal;font-family:'Liberation Sans', sans-serif;transform:scaleX(1.0849);">2.4</div>
<div class="t" style="left:2490.62px;top:860.26px;font-size:24.64px;color:#444444;font-weight:normal;font-family:'Liberation Sans', sans-serif;transform:scaleX(1.0849);">2.2</div>
<div class="t" style="left:2490.62px;top:978.26px;font-size:24.64px;color:#444444;font-weight:normal;font-family:'Liberation Sans', sans-serif;transform:scaleX(1.0849);">2.0</div>
<div class="t" style="left:2490.62px;top:1096.56px;font-size:24.64px;color:#444444;font-weight:normal;font-family:'Liberation Sans', sans-serif;transform:scaleX(1.0849);">1.8</div>
<div class="t" style="left:2551.50px;top:1144.46px;font-size:24.64px;color:#444444;font-weight:normal;font-family:'Liberation Sans', sans-serif;transform:scaleX(1.0422);">396.5</div>
<div class="t" style="left:3152.44px;top:1144.46px;font-size:24.64px;color:#444444;font-weight:normal;font-family:'Liberation Sans', sans-serif;transform:scaleX(1.0596);">792.9</div>
<div class="t" style="left:2800.00px;top:1181.93px;font-size:26.67px;color:#000000;font-weight:bold;font-family:'Liberation Sans', sans-serif;transform:scaleX(1.0857);">Sample Size</div>
<div class="t" style="left:2758.14px;top:1385.13px;font-size:30.43px;color:#69a5b9;font-weight:bold;font-family:'Liberation Sans', sans-serif;transform:scaleX(0.9306);z-index:9;">R code copied to clipboard</div>
<div class="t" style="left:2759.01px;top:1432.66px;font-size:28.99px;color:#69a5b9;font-weight:normal;font-family:'Liberation Sans', sans-serif;transform:scaleX(0.9872);z-index:9;">getDesignInverseNormal(kMax = 2) |&gt;</div>
<div class="t" style="left:2759.00px;top:1479.66px;font-size:28.99px;color:#69a5b9;font-weight:normal;font-family:'Liberation Sans', sans-serif;z-index:9;">getSampleSizeMeans(alternative =</div>
<div class="t" style="left:2759.06px;top:1525.96px;font-size:28.99px;color:#69a5b9;font-weight:normal;font-family:'Liberation Sans', sans-serif;transform:scaleX(0.9438);z-index:9;">0.2) |&gt;</div>
<div class="t" style="left:2758.90px;top:1573.96px;font-size:28.99px;color:#69a5b9;font-weight:normal;font-family:'Liberation Sans', sans-serif;transform:scaleX(1.0954);z-index:9;">print()</div>
</body></html>
